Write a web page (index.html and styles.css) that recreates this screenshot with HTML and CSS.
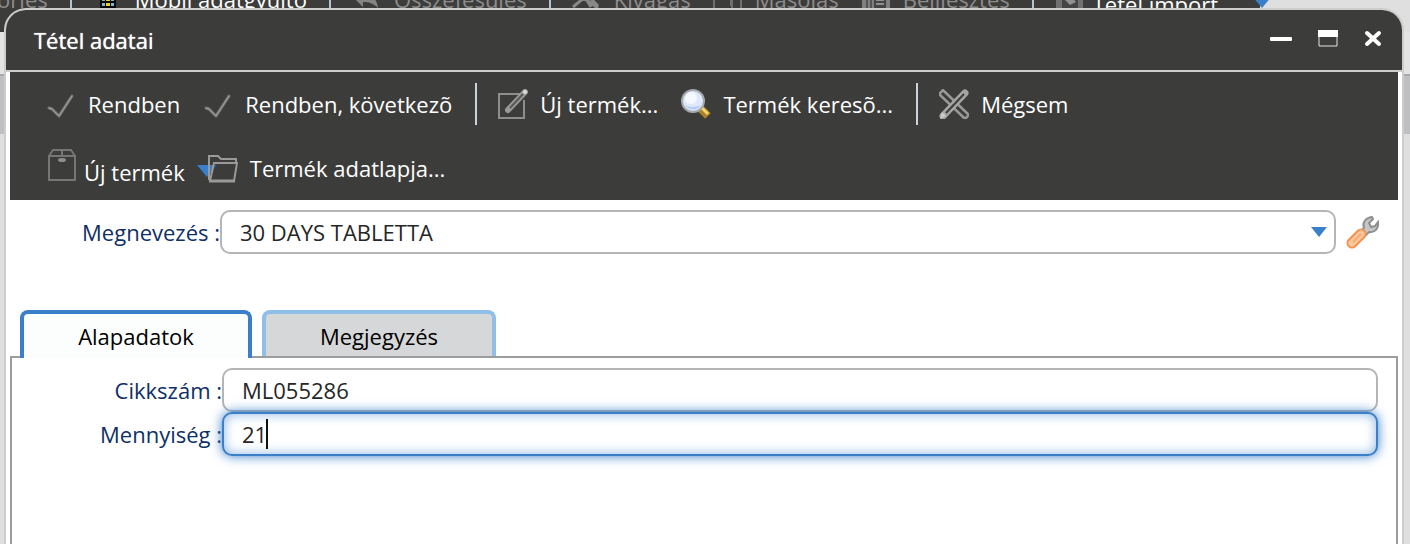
FILE: index.html
```html
<!DOCTYPE html>
<html lang="hu">
<head>
  <meta charset="UTF-8">
  <meta name="viewport" content="width=device-width, initial-scale=1.0">
  <title>Tétel adatai</title>
  <link rel="stylesheet" href="styles.css">
</head>

<body>
  <!-- page behind the window -->
  <div class="page">
    <nav class="app-bar">
      <button class="app-item dim first">Törlés</button>
      <span class="app-sep"></span>
      <button class="app-item">
        <svg width="30" height="30" viewBox="0 0 30 30"><rect x="7" y="0" width="16" height="28" fill="#0a0a0a"/><path d="M9 14h3v3H9zM18 14h3v3h-3zM9 19h3v3H9zM18 19h3v3h-3z" fill="#7fb4d8"/><path d="M13 14h4v3h-4zM13 19h4v3h-4z" fill="#f0d020"/></svg>
        Mobil adatgyűjtő
      </button>
      <span class="app-sep"></span>
      <button class="app-item dim">
        <svg width="30" height="30" viewBox="0 0 30 30"><path d="M1 13l10-9v5c8 0 14 6 15 15-5-5-9-6-15-6v5z" fill="#858585"/></svg>
        Összefésülés
      </button>
      <span class="app-sep"></span>
      <button class="app-item dim">
        <svg width="30" height="30" viewBox="0 0 30 30"><path d="M13 13L1 23M10 13l16 11M16 12l10 10M13 13l6 10" fill="none" stroke="#888" stroke-width="3"/></svg>
        Kivágás
      </button>
      <button class="app-item dim">
        <svg width="30" height="30" viewBox="0 0 30 30"><path d="M1 2h18v26H1zM19 10h9v18h-9M12 14h6v8" fill="none" stroke="#707070" stroke-width="2"/></svg>
        Másolás
      </button>
      <button class="app-item dim">
        <svg width="30" height="30" viewBox="0 0 30 30"><path d="M1 2h28v26H1z" fill="#808080"/><path d="M6 4v24M10 4v24" stroke="#555" stroke-width="2"/><path d="M13 12h12v12H13z" fill="#444"/><path d="M15 16h8M15 20h8" stroke="#909090" stroke-width="2"/></svg>
        Beillesztés
      </button>
      <span class="app-sep"></span>
      <button class="app-item import">
        <svg width="30" height="30" viewBox="0 0 30 30"><path d="M1 0h27v28H1z" fill="#707070"/><path d="M7 2h16v17H7z" fill="#444"/><path d="M10 11l7-3 4 5-6 3z" fill="#909090"/></svg>
        Tétel import
      </button>
      <svg class="app-arrow" width="20" height="12" viewBox="0 0 20 12"><path d="M0 0h20L10 12z" fill="#3a7fca"/></svg>
    </nav>
    <div class="page-strip"></div>
    <div class="page-head"></div>
  </div>

  <div class="window" role="dialog" aria-labelledby="windowTitle">
    <header class="title-bar">
      <h1 id="windowTitle">Tétel adatai</h1>
      <div class="window-buttons">
        <button aria-label="Kis méret">
          <svg width="22" height="22" viewBox="0 0 22 22"><rect x="0" y="10" width="22" height="4" rx="1" fill="#fff"/></svg>
        </button>
        <button aria-label="Teljes méret">
          <svg width="20" height="22" viewBox="0 0 20 22"><path d="M1 4h18v15H1z" fill="none" stroke="#e4e4e4" stroke-width="1"/><path d="M0 3h20v7H0z" fill="#fff"/></svg>
        </button>
        <button aria-label="Bezárás">
          <svg width="18" height="22" viewBox="0 0 18 22"><path d="M3 6l12 11M15 6L3 17" stroke="#fff" stroke-width="4" stroke-linecap="round"/></svg>
        </button>
      </div>
    </header>

    <div class="toolbar">
      <div class="tool-row">
        <button class="tool">
          <svg width="30" height="30" viewBox="0 0 30 30"><path d="M3 19l3 1 7 7L26 7" fill="none" stroke="#777" stroke-width="3" stroke-linejoin="round" stroke-linecap="round"/><path d="M3 19l3 1 7 7L26 7" fill="none" stroke="#a0a0a0" stroke-width="1"/></svg>
          Rendben
        </button>
        <button class="tool">
          <svg width="30" height="30" viewBox="0 0 30 30"><path d="M3 19l3 1 7 7L26 7" fill="none" stroke="#777" stroke-width="3" stroke-linejoin="round" stroke-linecap="round"/><path d="M3 19l3 1 7 7L26 7" fill="none" stroke="#a0a0a0" stroke-width="1"/></svg>
          Rendben, következõ
        </button>
        <span class="tool-sep"></span>
        <button class="tool">
          <svg width="30" height="30" viewBox="0 0 30 30"><path d="M22 5H1v24h25V11" fill="none" stroke="#8e8e8e" stroke-width="2"/><path d="M10 21L27 3" stroke="#999" stroke-width="6" stroke-linecap="round"/><path d="M12 19L25 5" stroke="#5a5a59" stroke-width="2"/><circle cx="27" cy="3" r="2" fill="#ddd"/></svg>
          Új termék...
        </button>
        <button class="tool">
          <svg width="30" height="30" viewBox="0 0 30 30"><path d="M18 18l9 9" stroke="#a9822c" stroke-width="8"/><path d="M20 18l7 7" stroke="#f3d56b" stroke-width="3"/><circle cx="12" cy="12" r="11" fill="#dfe9fb" stroke="#a4a8ae" stroke-width="2"/><circle cx="10" cy="9" r="6" fill="#f5f9ff"/><path d="M4 16c4 6 12 6 16 0-4 2-11 3-16 0z" fill="#b6cdf3"/></svg>
          Termék keresõ...
        </button>
        <span class="tool-sep"></span>
        <button class="tool">
          <svg width="30" height="30" viewBox="0 0 30 30"><path d="M4 5l22 21" stroke="#999" stroke-width="8" stroke-linecap="square"/><path d="M4 5l22 21" stroke="#3c3c3a" stroke-width="3" stroke-linecap="square"/><path d="M4 27L26 4" stroke="#a5a5a5" stroke-width="7" stroke-linecap="round"/><path d="M7 24L25 5" stroke="#3c3c3a" stroke-width="2"/><path d="M1 30l2-7 4 4z" fill="#ccc"/></svg>
          Mégsem
        </button>
      </div>
      <div class="tool-row">
        <button class="tool tool-split">
          <svg width="30" height="32" viewBox="0 0 30 32"><path d="M3 7h26v24H3zM3 7l4-6h18l4 6M16 1v6" fill="none" stroke="#767676" stroke-width="2"/><ellipse cx="16" cy="11" rx="4" ry="2" fill="#8e8e8e"/></svg>
          <span>Új termék</span>
          <svg class="split-arrow" width="20" height="12" viewBox="0 0 20 12"><path d="M0 0h20L10 12z" fill="#3a7fca"/></svg>
        </button>
        <button class="tool tool-card">
          <svg width="30" height="30" viewBox="0 0 30 30"><path d="M1 27V3h9l3 3h15v4" fill="none" stroke="#9a9a9a" stroke-width="2"/><path d="M2 28L6 10h23l-3 18z" fill="#3c3c3a" fill-opacity="0.6" stroke="#999" stroke-width="2"/><path d="M1 28h26" stroke="#999" stroke-width="3"/></svg>
          Termék adatlapja...
        </button>
      </div>
    </div>

    <form class="content">
      <div class="row row-name">
        <label for="name">Megnevezés :</label>
        <div class="select-box">
          <select id="name" class="field">
            <option>30 DAYS TABLETTA</option>
          </select>
          <svg class="select-arrow" width="16" height="10" viewBox="0 0 16 10"><path d="M0 0h16L8 10z" fill="#3a7fca"/></svg>
        </div>
        <button type="button" class="wrench" aria-label="Beállítás">
          <svg width="34" height="34" viewBox="0 0 34 34"><path d="M14 17l4-4c-2-5 1-10 8-11l1 2-4 4 2 4 4-1 3-4c1 6-3 11-9 10l-5 5z" fill="#c6c6c6" stroke="#8f8f8f" stroke-width="2"/><path d="M6 28L15 19" stroke="#f29350" stroke-width="11" stroke-linecap="round"/><path d="M6 28L15 19" stroke="#f9c79c" stroke-width="7" stroke-linecap="round"/><path d="M7 27l8-8" stroke="#f2ab74" stroke-width="2"/></svg>
        </button>
      </div>

      <div class="tabs" role="tablist">
        <button type="button" class="tab active" role="tab" aria-selected="true">Alapadatok</button>
        <button type="button" class="tab" role="tab" aria-selected="false">Megjegyzés</button>
      </div>

      <div class="panel" role="tabpanel">
        <div class="row">
          <label for="code">Cikkszám :</label>
          <input type="text" id="code" class="field" value="ML055286">
        </div>
        <div class="row">
          <label for="amount">Mennyiség :</label>
          <div class="amount-box">
            <input type="text" id="amount" class="field focused" value="21">
            <span class="caret"></span>
          </div>
        </div>
      </div>
    </form>
  </div>
</body>
</html>
```
FILE: styles.css
```css
* {
  box-sizing: border-box;
}

body {
  margin: 0;
  height: 100vh;
  overflow: hidden;
  position: relative;
  background-color: #dfdfdf;
  font-family: "Open Sans", "Noto Sans", sans-serif;
  font-size: 22px;
  line-height: 30px;
}

button,
input,
select {
  font: inherit;
  color: inherit;
}

button {
  display: flex;
  align-items: center;
  padding: 0;
  border: none;
  background: none;
  white-space: nowrap;
  cursor: pointer;
}

svg {
  flex: none;
}

/* page behind the window */
.app-bar {
  display: flex;
  align-items: flex-start;
  gap: 22px;
  height: 32px;
  margin-right: 150px;
  background-color: #3c3c3a;
  color: #fff;
}

.app-item {
  gap: 12px;
  margin-top: -16px;
}

.app-item.first {
  margin-left: -15px;
}

.app-item.dim {
  color: #8c8c8c;
}

.app-item.import {
  gap: 8px;
  margin-top: -11px;
}

.app-sep {
  flex: none;
  width: 2px;
  height: 20px;
  margin-right: -1px;
  background-color: #b9c3d0;
}

.app-arrow {
  margin-top: -4px;
  margin-left: 12px;
}

.page-strip {
  height: 44px;
  background-color: #e4e4e4;
  border-bottom: 2px solid #a8a8a8;
}

.page-head {
  height: 58px;
  background-color: #bebfc0;
}

/* window */
.window {
  position: absolute;
  top: 8px;
  left: 4px;
  right: 6px;
  bottom: 0;
  display: flex;
  flex-direction: column;
  overflow: hidden;
  background-color: #fff;
  border: 2px solid #cdcdcd;
  border-bottom: none;
  border-radius: 22px 22px 0 0;
}

.title-bar {
  display: flex;
  justify-content: space-between;
  align-items: center;
  height: 62px;
  padding: 0 20px 0 28px;
  background-color: #3c3c3a;
  border-bottom: 2px solid #cdcdcd;
  color: #fff;
}

.title-bar h1 {
  margin: 0;
  font-size: 22px;
  font-weight: 400;
  text-shadow: 0 0 1px #fff;
}

.window-buttons {
  display: flex;
  gap: 26px;
  padding-bottom: 4px;
}

.toolbar {
  margin: 0 4px;
  padding: 0 36px;
  background-color: #3c3c3a;
  color: #fff;
}

.tool-row {
  display: flex;
  align-items: center;
  gap: 23px;
  height: 64px;
}

.tool {
  gap: 12px;
}

.tool-sep {
  width: 2px;
  height: 42px;
  margin-right: -2px;
  background-color: #ccd3de;
}

.tool-split {
  align-items: flex-start;
  gap: 8px;
}

.tool-split span {
  padding-top: 8px;
}

.split-arrow {
  margin: 16px 0 0 4px;
}

.tool-card {
  margin-left: -32px;
}

/* form */
.content {
  flex: 1;
  display: flex;
  flex-direction: column;
  padding: 10px 4px 0;
}

.row {
  display: flex;
  align-items: center;
}

.row label {
  flex: none;
  width: 210px;
  text-align: right;
  color: #0f2f66;
}

.row-name {
  padding-right: 18px;
}

.field {
  display: block;
  flex: 1;
  width: 100%;
  height: 44px;
  padding: 0 18px;
  border: 2px solid #b5b5b5;
  border-radius: 10px;
  background-color: #fff;
  color: #262626;
  outline: none;
  appearance: none;
}

.select-box,
.amount-box {
  flex: 1;
  position: relative;
}

.select-arrow {
  position: absolute;
  top: 17px;
  right: 9px;
  pointer-events: none;
}

.wrench {
  margin-left: 10px;
}

.focused {
  border-color: #3a7fca;
  box-shadow: 0 0 12px #3a7fca, inset 0 0 12px #8db6e4;
}

.caret {
  position: absolute;
  top: 7px;
  left: 44px;
  width: 2px;
  height: 30px;
  background-color: #111;
}

.tabs {
  display: flex;
  align-items: flex-start;
  gap: 10px;
  margin-top: 56px;
  padding-left: 10px;
}

.tab {
  justify-content: center;
  width: 234px;
  height: 46px;
  padding-top: 2px;
  border: 4px solid #8fbfe9;
  border-bottom: none;
  border-radius: 8px 8px 0 0;
  background-color: #d6d7d9;
  color: #000;
}

/* the open tab covers the top line of the panel */
.tab.active {
  position: relative;
  width: 232px;
  height: 48px;
  margin-bottom: -2px;
  padding-top: 0;
  border-color: #3a7fca;
  background-color: #fcfdfd;
}

.panel {
  flex: 1;
  padding: 10px 18px 0 0;
  border: 2px solid #9c9c9c;
  border-bottom: none;
}
```
